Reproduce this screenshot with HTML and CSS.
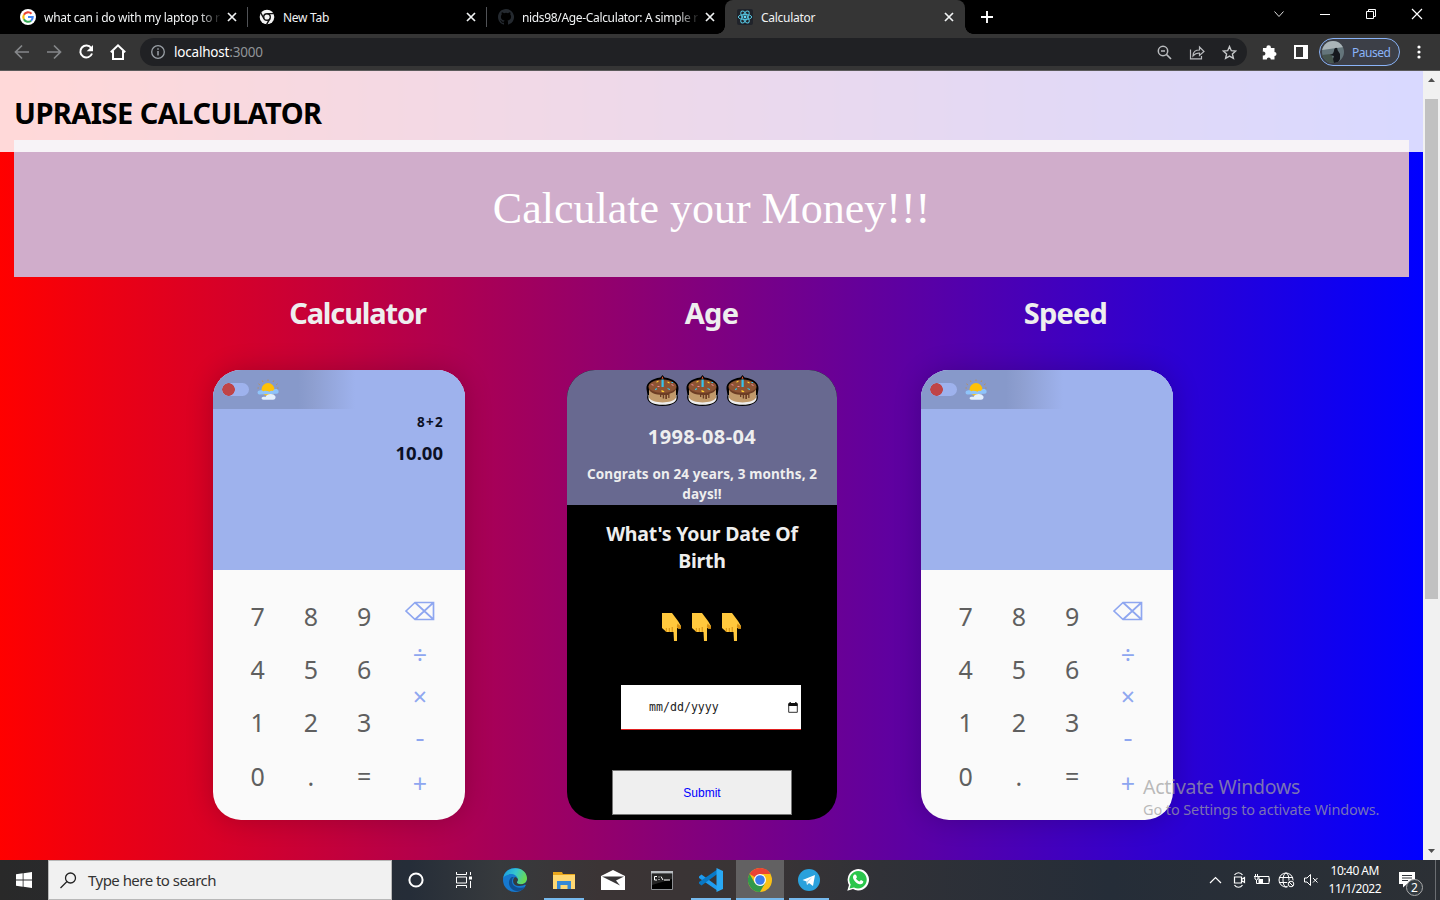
FILE: index.html
```html
<!DOCTYPE html>
<html lang="en">
<head>
<meta charset="utf-8">
<title>Calculator</title>
<link rel="stylesheet" href="styles.css">
</head>
<body>
<svg class="defs" width="0" height="0" aria-hidden="true">
  <symbol id="close" viewBox="0 0 10 10"><path d="M1 1l8 8M9 1L1 9" fill="none" stroke="#f1f3f4" stroke-width="1.7"/></symbol>
  <symbol id="sun" viewBox="0 0 22 22">
    <path d="M11 2V.5M6 3l-.7-1.500M16 3l.7-1.500M2.800 5.800L1.500 4.800M19.200 5.800l1.300-1M1.800 9H.5M20.200 9h1.300" stroke="#b98f5a" stroke-width="1"/>
    <circle cx="11" cy="10.500" r="6.500" fill="#ffc107"/>
    <path d="M2.500 15.500a2 2 0 010-4c2-.6 3 .2 4 .8 2-1 4-.2 6 .5 1-1.500 3-.8 3.500-.8 1-2.500 4.500-2.500 5.500-.3.500 2-.5 2.800-2 3z" fill="#8fc4fa"/>
    <path d="M6.500 20.800c-2.500 0-2.500-3 0-3 1-.1 1.500.3 2 .2 1-3.500 8-4.500 10-.5.4 2-.9 3.300-2.500 3.300z" fill="#e3effd"/>
  </symbol>
  <symbol id="cake" viewBox="0 0 34 34">
    <path d="M17 1l2 2.500C28 4.500 33.500 9 33 15l-1 6c2 6-4 11-15 11S0 27 2 21l-1-6C.5 9 6 4.500 15 3.500z" fill="#000"/>
    <path d="M3 21h28v3c0 4-5 6.800-14 6.800S3 28 3 24z" fill="#eee"/>
    <path d="M3.500 14h27v9.500c-3 6.500-24 6.500-27 0z" fill="#c19a6b"/>
    <path d="M3 13c0-10 28-10 28 0 0 3.500-3 5.800-7 6.800V24h-1.300v-3h-1.200v4h-1.700v-4h-1.200v3.500h-1.400V21h-1.400v2h-1.300v-2.200C7 20 3 17.500 3 13z" fill="#6d3d24"/>
    <ellipse cx="17" cy="12.500" rx="13.800" ry="6.500" fill="#8d5433"/>
    <path d="M16 5.500h2.200V13H16z" fill="#35c3ee"/><path d="M17 2.200l1 2.500h-2z" fill="#f45b36"/>
    <g fill="#ffcf33"><path d="M11 7.500l2-1v1.200l-2 1zM22 7.500l2 .8v1.200l-2-.8zM16 16l3 1.200-1 1-2-.5z"/></g>
    <g fill="#f28b9b"><path d="M6 10l2 .8v1l-2-.8zM26 10l2 1v1l-2-1zM12 12h2v1h-2z"/></g>
    <g fill="#35c3ee"><path d="M9.500 15l2-1v1.200l-2 1zM22 14l2.500 1v1.200L22 15zM26 8h1.500v1H26z"/></g>
  </symbol>
  <symbol id="point" viewBox="0 0 20 30">
    <path d="M0 1h10l6 8 3 5v2.500h-3l-1-1V29h-3l-.5-9H4.500L0 16z" fill="#ffc83d"/>
    <path d="M15.500 11.500l3.500 3v2.200h-2.700l-1.500-2.200z" fill="#d48d10"/>
    <path d="M4.300 16v4M7.300 16v4M10.200 15v5" stroke="#d48d10" fill="none"/>
  </symbol>
  <symbol id="back" viewBox="0 0 30 20"><path d="M1 10l9-8.500h18.500v17H10zM10 1.500l18.500 17M28.500 1.500L10 18.500" fill="none" stroke="#8ea6f0" stroke-width="1.700"/></symbol>
</svg>

<div class="tabs">
  <div class="tab">
    <svg class="fav" viewBox="0 0 16 16"><circle cx="8" cy="8" r="8" fill="#fff"/><g fill="none" stroke-width="2.100"><path d="M3.900 5.800A4.700 4.700 0 0111.500 4.800" stroke="#ea4335"/><path d="M3.900 5.800a4.700 4.700 0 000 4.400" stroke="#fbbc05"/><path d="M3.900 10.200a4.700 4.700 0 007.200 1.500" stroke="#34a853"/><path d="M8 8h4.700a4.700 4.700 0 01-1.600 3.700" stroke="#4285f4"/></g></svg>
    <span class="tab-title fade">what can i do with my laptop to r</span><svg class="x"><use href="#close"/></svg>
  </div>
  <div class="tab">
    <svg class="fav" viewBox="0 0 16 16"><circle cx="8" cy="8" r="7.300" fill="#f3f3f3"/><circle cx="8" cy="8" r="3.300" fill="none" stroke="#111" stroke-width="1.400"/><path d="M8 4.600h7M5 9.600L1.600 3.700M10.900 9.700L7.500 15.600" stroke="#111" stroke-width="1.400"/></svg>
    <span class="tab-title">New Tab</span><svg class="x"><use href="#close"/></svg>
  </div>
  <div class="tab nosep">
    <svg class="fav" viewBox="0 0 16 16"><path fill="#24292f" d="M8 0C3.580 0 0 3.580 0 8c0 3.540 2.290 6.530 5.470 7.590.4.070.55-.17.55-.38v-1.500c-2.230.48-2.700-.94-2.700-.94-.36-.92-.89-1.170-.89-1.170-.73-.5.050-.49.050-.49.800.060 1.230.83 1.230.83.720 1.230 1.880.87 2.340.67.070-.52.280-.87.500-1.070-1.780-.2-3.640-.89-3.640-3.950 0-.87.310-1.590.82-2.150-.08-.2-.36-1.020.080-2.120 0 0 .67-.21 2.200.82a7.600 7.600 0 014 0c1.530-1.040 2.200-.82 2.200-.82.440 1.100.160 1.920.080 2.120.510.560.820 1.270.820 2.150 0 3.070-1.870 3.750-3.650 3.950.290.250.540.730.540 1.480v2.200c0 .21.150.46.550.38A8 8 0 008 0z"/></svg>
    <span class="tab-title fade wide">nids98/Age-Calculator: A simple r</span><svg class="x"><use href="#close"/></svg>
  </div>
  <div class="tab active">
    <svg class="fav" viewBox="0 0 16 16"><rect width="16" height="16" rx="2" fill="#20232a"/><g fill="none" stroke="#55c4df" stroke-width="1"><ellipse cx="8" cy="8" rx="6.700" ry="2.600"/><ellipse cx="8" cy="8" rx="6.700" ry="2.600" transform="rotate(60 8 8)"/><ellipse cx="8" cy="8" rx="6.700" ry="2.600" transform="rotate(120 8 8)"/></g><circle cx="8" cy="8" r="1.400" fill="#61dafb"/></svg>
    <span class="tab-title">Calculator</span><svg class="x"><use href="#close"/></svg>
  </div>
  <svg class="plus" width="12" height="12" viewBox="0 0 12 12"><path d="M6 0v12M0 6h12" stroke="#fff" stroke-width="1.900"/></svg>
  <div class="controls">
    <svg width="46" height="28" viewBox="0 0 46 28"><path d="M18.500 11.500l4.500 5 4.500-5" fill="none" stroke="#ddd"/></svg>
    <svg width="46" height="28" viewBox="0 0 46 28"><path d="M18 14.500h10" stroke="#fff"/></svg>
    <svg width="46" height="28" viewBox="0 0 46 28"><path d="M18.500 11.500h7v7h-7zM20.500 11.500v-2h7v7h-2" fill="none" stroke="#fff"/></svg>
    <svg width="46" height="28" viewBox="0 0 46 28"><path d="M18 9l10 10M28 9L18 19" stroke="#fff" stroke-width="1.200"/></svg>
  </div>
</div>

<div class="toolbar">
  <div class="nav">
    <svg width="16" height="16" viewBox="0 0 16 16"><path d="M15 8H2M8 1.500L1.500 8 8 14.500" fill="none" stroke="#85878a" stroke-width="1.700"/></svg>
    <svg width="16" height="16" viewBox="0 0 16 16"><path d="M1 8h13M8 1.500L14.500 8 8 14.500" fill="none" stroke="#85878a" stroke-width="1.700"/></svg>
    <svg width="16" height="16" viewBox="0 0 16 16"><path d="M13.200 4A6 6 0 1014 9.500" fill="none" stroke="#fff" stroke-width="2"/><path d="M15 1v6.300H8.700z" fill="#fff"/></svg>
    <svg width="16" height="16" viewBox="0 0 16 16"><path d="M.8 8.300L8 1.400l7.200 6.900M3 7v8h10V7" fill="none" stroke="#fff" stroke-width="2"/></svg>
  </div>
  <div class="address">
    <svg width="14" height="14" viewBox="0 0 14 14"><circle cx="7" cy="7" r="6.300" fill="none" stroke="#9aa0a6" stroke-width="1.300"/><path d="M7 6v4.500M7 3.300v1.500" stroke="#9aa0a6" stroke-width="1.500"/></svg>
    <span class="url">localhost<i>:3000</i></span>
    <svg width="15" height="15" viewBox="0 0 15 15"><circle cx="6" cy="6" r="4.700" fill="none" stroke="#b9bbbe" stroke-width="1.500"/><path d="M4 6h4M9.500 9.500L14 14" stroke="#b9bbbe" stroke-width="1.700"/></svg>
    <svg width="16" height="15" viewBox="0 0 16 15"><path d="M1.500 4.500v9.300h11V11M4 11c0-4.500 3-6 6.500-6V2l4.500 4.500-4.500 4V8C7.500 8 5.500 9 4 11z" fill="none" stroke="#b9bbbe" stroke-width="1.200"/></svg>
    <svg width="15" height="15" viewBox="0 0 15 15"><path d="M7.500 1.500l1.800 4.200 4.500.3-3.400 3 1 4.400-3.900-2.300-3.900 2.300 1-4.400L1.200 6l4.500-.3z" fill="none" stroke="#c6c8ca" stroke-width="1.400"/></svg>
  </div>
  <svg class="puzzle" width="15" height="16" viewBox="0 0 15 16"><path d="M1 4h3.500a2.200 2.200 0 114.300 0h3.700v4a2 2 0 110 4v3.500H8.800a2 2 0 10-4 0H.8v-4a2 2 0 100-3.800z" fill="#fff"/></svg>
  <svg class="side" width="14" height="14" viewBox="0 0 14 14"><path d="M1 1h12v12H1z" fill="none" stroke="#fff" stroke-width="2"/><path d="M9 1h4v12H9z" fill="#fff"/></svg>
  <div class="profile">
    <svg width="22" height="22" viewBox="0 0 22 22"><defs><clipPath id="round"><circle cx="11" cy="11" r="11"/></clipPath></defs><g clip-path="url(#round)"><path d="M0 0h22v22H0z" fill="#64757b"/><path d="M0 0h22v6L0 9z" fill="#aab4b8"/><path d="M0 14l9-1 4 9H0z" fill="#46554e"/><path d="M12 10c0-4 4-4 3.500-1l2.500 4v5l-2 4h-4l-1-4 1-3-4-1 3-1.500z" fill="#15181e"/></g></svg>
    <span>Paused</span>
  </div>
  <svg class="dots" width="4" height="14" viewBox="0 0 4 14"><g fill="#fff"><circle cx="2" cy="2" r="1.600"/><circle cx="2" cy="7" r="1.600"/><circle cx="2" cy="12" r="1.600"/></g></svg>
</div>

<div class="window">
  <main class="page">
    <header class="site-header"><h1>UPRAISE CALCULATOR</h1></header>
    <div class="banner">Calculate your Money!!!</div>
    <div class="columns">
      <section class="column">
        <h2 class="long">Calculator</h2>
        <div class="card">
          <div class="display"><div class="mode"><span class="switch"></span><svg class="sun"><use href="#sun"/></svg></div>
            <div class="expr">8+2</div><div class="result">10.00</div></div>
          <div class="pad">
            <div class="digits"><b>7</b><b>8</b><b>9</b><b>4</b><b>5</b><b>6</b><b>1</b><b>2</b><b>3</b><b>0</b><b>.</b><b>=</b></div>
            <div class="ops"><svg><use href="#back"/></svg><b>÷</b><b>×</b><b class="minus">-</b><b class="add">+</b></div>
          </div>
        </div>
      </section>
      <section class="column">
        <h2>Age</h2>
        <div class="card age">
          <div class="answer">
            <div class="cakes"><svg><use href="#cake"/></svg><svg><use href="#cake"/></svg><svg><use href="#cake"/></svg></div>
            <div class="date">1998-08-04</div>
            <div class="congrats">Congrats on 24 years, 3 months, 2<br>days!!</div>
          </div>
          <div class="question">What's Your Date Of<br>Birth</div>
          <div class="points"><svg><use href="#point"/></svg><svg><use href="#point"/></svg><svg><use href="#point"/></svg></div>
          <div class="field"><span>mm/dd/yyyy</span><svg width="10" height="11" viewBox="0 0 10 11"><path d="M.7 2h8.600v8.300H.7z" fill="none" stroke="#333" stroke-width="1"/><path d="M.5 1h9v3h-9zM1.500 0h1.300v2H1.500zM7.200 0h1.300v2H7.200z" fill="#111"/></svg></div>
          <button class="submit">Submit</button>
        </div>
      </section>
      <section class="column">
        <h2>Speed</h2>
        <div class="card">
          <div class="display"><div class="mode"><span class="switch"></span><svg class="sun"><use href="#sun"/></svg></div></div>
          <div class="pad">
            <div class="digits"><b>7</b><b>8</b><b>9</b><b>4</b><b>5</b><b>6</b><b>1</b><b>2</b><b>3</b><b>0</b><b>.</b><b>=</b></div>
            <div class="ops"><svg><use href="#back"/></svg><b>÷</b><b>×</b><b class="minus">-</b><b class="add">+</b></div>
          </div>
        </div>
      </section>
    </div>
  </main>
  <div class="scrollbar">
    <svg width="17" height="17" viewBox="0 0 17 17"><path d="M5 11l3.500-4 3.500 4z" fill="#505050"/></svg>
    <div class="thumb"></div>
    <svg class="down" width="17" height="17" viewBox="0 0 17 17"><path d="M5 6l3.500 4L12 6z" fill="#505050"/></svg>
  </div>
</div>
<div class="watermark"><div class="wm-title">Activate Windows</div><div class="wm-sub">Go to Settings to activate Windows.</div></div>

<footer class="taskbar">
  <div class="start"><svg width="16" height="16" viewBox="0 0 16 16"><path d="M0 2.200l6.700-.9v6.300H0zM7.500 1.200L16 0v7.600H7.500zM0 8.400h6.700v6.300L0 13.800zM7.500 8.400H16V16l-8.500-1.200z" fill="#fff"/></svg></div>
  <div class="search"><svg width="17" height="17" viewBox="0 0 17 17"><circle cx="10.500" cy="6" r="5" fill="none" stroke="#222" stroke-width="1.300"/><path d="M7 9.500l-6.500 6.500" stroke="#222" stroke-width="1.300"/></svg><span>Type here to search</span></div>
  <div class="apps sys">
    <div><svg width="16" height="16" viewBox="0 0 16 16"><circle cx="8" cy="8" r="6.600" fill="none" stroke="#fff" stroke-width="2"/></svg></div>
    <div><svg width="16" height="16" viewBox="0 0 16 16"><path d="M.5 0v2.500h10V0M.5 16v-2.500h10V16M.5 5h10v6H.5zM14.500 0v3M14.500 9v7" fill="none" stroke="#fff"/><path d="M13 4.500h3v3h-3z" fill="#fff"/></svg></div>
  </div>
  <div class="apps">
    <div><svg width="24" height="24" viewBox="0 0 24 24"><defs><linearGradient id="eg" x1="0" y1=".2" x2="1" y2=".5"><stop offset="0" stop-color="#1b9de2"/><stop offset=".5" stop-color="#36c6cf"/><stop offset="1" stop-color="#6bdc4d"/></linearGradient></defs><circle cx="12" cy="12" r="12" fill="#1679d0"/><path d="M.2 10C2-3 23-3 24 10c0 5-4 7-8 6-3-.7-2-2-1-4C14 4 3 5 .2 10z" fill="url(#eg)"/><path d="M9 9c-5 3-4 12 4 14 4 .6 7-1 9.500-4-6 2-13 0-13.500-5-.2-2 .5-4 2-5z" fill="#104f91"/><path d="M12 9c-3 2-3 9 4 9 3 0 5-1 6-1.500L24 18V12c-1 4-5 5-8 4-3-.7-2-2-1-4 0-1-1-2.500-3-3z" fill="#353b3e"/></svg></div>
    <div class="run"><svg width="22" height="19" viewBox="0 0 22 19"><path d="M0 1h9l1 2h12v15H0z" fill="#e9a61c"/><path d="M0 4h22v14H0z" fill="#ffd872"/><path d="M4 18v-8h14v8h-3.500v-4h-7v4z" fill="#3689d6"/></svg></div>
    <div><svg width="24" height="20" viewBox="0 0 24 20"><path d="M0 6l12-6 12 6v14H0z" fill="#fff"/><path d="M1 6.500h22l-8 4 4 5L8 10z" fill="#373536"/></svg></div>
    <div><svg width="22" height="19" viewBox="0 0 22 19"><path d="M.5.5h21v18H.5z" fill="#000" stroke="#8c8f93"/><path d="M0 0h22v2.500H0z" fill="#b9bdc1"/><path d="M1 3h20v5L1 14z" fill="#252525"/><path d="M6 5.500H3.500V9H6M8 5.500v1M8 8v1M10 5.500l2 3.500M13 9h6" fill="none" stroke="#fff"/></svg></div>
    <div class="run"><svg width="24" height="24" viewBox="0 0 24 24"><path d="M0 8.500l2.500-2L19 18.500v4.500L0 10z" fill="#1f9cf0"/><path d="M0 15.500l2.500 2L19 5.500V1L0 14z" fill="#0878c6"/><path d="M17.500 0L24 3v18l-6.500 3z" fill="#29a8f4"/></svg></div>
    <div class="run current"><svg width="24" height="24" viewBox="0 0 24 24"><circle cx="12" cy="12" r="12" fill="#fbc116"/><path d="M12 12L1.600 6A12 12 0 0122.400 6H12z" fill="#ea4335"/><path d="M1.600 6A12 12 0 0012 24l5.200-9H6.800z" fill="#31994b"/><circle cx="12" cy="12" r="6" fill="#fff"/><circle cx="12" cy="12" r="4.800" fill="#3b7ded"/></svg></div>
    <div class="run"><svg width="22" height="22" viewBox="0 0 22 22"><circle cx="11" cy="11" r="11" fill="#2aa1dc"/><path d="M4.500 11L17 6l-2 11-4-3-2 2-.5-3.500z" fill="#fff"/><path d="M8.500 12.500l6-4.500-4.500 5-1 3z" fill="#b6d7e9"/></svg></div>
    <div><svg width="22" height="22" viewBox="0 0 22 22"><path d="M.3 21.700L2 16A10.700 10.700 0 116 20z" fill="#fff"/><path d="M2.500 19.500l1.200-4A8.700 8.700 0 117 18.500z" fill="#2bc64c"/><path d="M7.500 5.500l1.500.2 1 2.500-1 1.300c.8 1.500 2 2.400 3.500 3l1.400-1.400 2.400 1.200c.2 2-1.500 3.200-3.300 3C9.500 14.700 6.500 11.500 6 8.500c-.1-1.200.6-2.300 1.500-3z" fill="#fff"/></svg></div>
  </div>
  <div class="tray">
    <svg width="13" height="16" viewBox="0 0 13 16"><path d="M1 11l5.500-5.500L12 11" fill="none" stroke="#fff" stroke-width="1.200"/></svg>
    <svg width="13" height="16" viewBox="0 0 13 16"><path d="M1.500 5h7v6h-7zM8.500 7.500l3-2v5l-3-2M1.500 3c2-3 6-3 8 0M1.500 13c2 3 6 3 8 0" fill="none" stroke="#fff" stroke-width="1.200"/></svg>
    <svg width="17" height="16" viewBox="0 0 17 16"><path d="M5 4.500h10v7H5zM15.500 6.500v3M0 4.500h5M1.500 2v2.500M3.500 2v2.500M1 5v2l1.500 1L4 7V5M2.500 8v3.500H5" fill="none" stroke="#fff"/><path d="M5 7h4v4H5z" fill="#fff"/></svg>
    <svg width="17" height="16" viewBox="0 0 17 16"><g fill="none" stroke="#fff"><circle cx="8" cy="8" r="7"/><ellipse cx="8" cy="8" rx="3" ry="7"/><path d="M1 5.500h14M1 10.500h14"/></g><circle cx="13" cy="12" r="4" fill="#2b3036"/><circle cx="13" cy="12" r="2.800" fill="none" stroke="#fff"/><path d="M11 10l4 4" stroke="#fff"/></svg>
    <svg width="16" height="16" viewBox="0 0 16 16"><path d="M1.500 6H4l3.500-3.500v11L4 10H1.500zM10 6l4.500 4.500M14.500 6L10 10.500" fill="none" stroke="#fff"/></svg>
  </div>
  <div class="clock"><div>10:40 AM</div><div>11/1/2022</div></div>
  <div class="notice"><svg width="17" height="17" viewBox="0 0 17 17"><path d="M0 1h16v12H8l-4 3.500V13H0z" fill="#fff"/><path d="M3 4.500h10M3 7h10M3 9.500h6" stroke="#30353b"/></svg><span>2</span></div>
</footer>
</body>
</html>
```
FILE: styles.css
```css
* { box-sizing: border-box; }
body { margin: 0; width: 1440px; height: 900px; overflow: hidden; display: flex; flex-direction: column; background: #000; font-family: "Noto Sans", "Open Sans", sans-serif; }
svg { display: block; flex: none; }
h1, h2 { margin: 0; }
b, i { font-weight: 400; font-style: normal; }
.defs { position: absolute; }

.tabs { height: 34px; flex: none; display: flex; padding-left: 8px; background: #000; }
.tab { width: 239px; height: 34px; display: flex; align-items: center; padding: 0 10px 0 12px; position: relative; color: #f1f3f4; font-size: 12px; }
.tab::after { content: ""; position: absolute; right: -1px; top: 7px; width: 1px; height: 20px; background: #505256; }
.tab.nosep::after { display: none; }
.tab.active { width: 240px; background: #353535; border-radius: 8px 8px 0 0; }
.tab.active::after, .tab.active::before { content: ""; position: absolute; width: 8px; height: 8px; top: auto; bottom: 0; }
.tab.active::before { left: -8px; background: radial-gradient(circle at 0 0, #000 7.5px, #353535 8px); }
.tab.active::after { right: -8px; background: radial-gradient(circle at 100% 0, #000 7.5px, #353535 8px); }
.fav { width: 16px; height: 16px; }
.tab-title { flex: none; width: 181px; margin-left: 8px; white-space: nowrap; letter-spacing: -0.28px; }
.tab-title.wide { letter-spacing: -0.34px; }
.fade { -webkit-mask-image: linear-gradient(90deg, #000 155px, transparent 178px); mask-image: linear-gradient(90deg, #000 155px, transparent 178px); }
.x { width: 10px; height: 10px; margin-left: 2px; }
.plus { margin: 11px 0 0 16px; }
.controls { display: flex; margin-left: auto; }

.toolbar { height: 37px; flex: none; display: flex; align-items: center; background: #353535; border-bottom: 1px solid #5b5b5b; }
.nav { display: flex; gap: 16px; padding-left: 14px; }
.address { width: 1107px; height: 28px; margin-left: 14px; padding: 0 10.500px 0 11px; border-radius: 14px; background: #202124; display: flex; align-items: center; }
.url { margin-left: 9px; margin-right: auto; font-size: 13.5px; color: #fff; letter-spacing: -0.2px; }
.url i { color: #909498; }
.address svg + svg { margin-left: 17px; }
.puzzle { margin-left: 15px; }
.side { margin-left: 17px; }
.profile { width: 81px; height: 28px; margin-left: 11px; padding-left: 2px; border: 1px solid #8ab4f8; border-radius: 14px; background: #3c3f47; display: flex; align-items: center; gap: 8px; color: #8ab4f8; font-size: 12px; letter-spacing: -0.5px; }
.dots { margin-left: 16.500px; }

.window { height: 789px; flex: none; display: flex; }
.page { width: 1423px; background: linear-gradient(90deg, #f00, #00f); display: flex; flex-direction: column; }
.site-header { height: 81px; flex: none; padding: 22px 14px 0; background: rgba(255, 255, 255, 0.85); }
h1 { font-size: 29px; line-height: 40px; color: #000; letter-spacing: -0.54px; white-space: nowrap; }
.banner { height: 137px; flex: none; margin: -12px 14px 0; background: linear-gradient(#f7f3f7 12px, #d0adcb 12px); display: flex; align-items: center; justify-content: center; font: 44px/50px "Liberation Serif", "Times New Roman", serif; color: #fff; }
.columns { display: grid; grid-template-columns: repeat(3, 354px); justify-content: center; }
.column { padding-top: 13px; }
h2 { height: 80px; line-height: 45px; font-size: 29px; text-align: center; color: #eee; letter-spacing: -0.8px; }
h2.long { letter-spacing: -1.15px; }
.card { width: 252px; height: 450px; margin-left: 32.500px; border-radius: 28px; overflow: hidden; background: #fafafa; box-shadow: 0 0 28px rgba(0, 0, 0, 0.2); }
.display { height: 200px; background: #9eb2ed; color: #0b1024; text-align: right; font-weight: 700; }
.mode { height: 39px; padding-left: 9px; display: flex; align-items: center; background: linear-gradient(90deg, #8799ca 85px, #8e9fd0 100px, #9eb2ed 142px); }
.switch { width: 27px; height: 13px; border-radius: 7px; background: radial-gradient(circle at 6.5px 6.5px, #c04446 6px, #9eb2ed 6.6px); }
.sun { width: 22px; height: 22px; margin: 1px 0 0 8px; }
.expr { padding: 3px 21px 0; font-size: 13.5px; line-height: 20px; letter-spacing: 1.3px; }
.result { padding: 7px 22px 0; font-size: 18.500px; line-height: 28px; letter-spacing: 0; }
.pad { height: 250px; padding: 19.500px 20px 17px 18px; display: flex; }
.digits { width: 160px; display: grid; grid-template-columns: repeat(3, 53.3px); grid-template-rows: repeat(4, 53.4px); text-align: center; font-size: 25px; line-height: 52px; color: #5f5f5f; }
.ops { flex: none; width: 52px; margin-left: 3px; display: flex; flex-direction: column; align-items: center; color: #8ea6f0; font-size: 25px; }
.ops svg { width: 30px; height: 20px; margin: 11.500px 0 13px; }
.ops b { height: 42px; line-height: 41px; }
.ops .minus { line-height: 39px; transform: scaleX(1.15); }
.ops .add { line-height: 47px; }

.age { width: 270px; background: #000; color: #eee; box-shadow: none; font-weight: 700; text-align: center; display: flex; flex-direction: column; align-items: center; }
.answer { width: 100%; height: 135px; flex: none; background: #686990; }
.cakes { display: flex; justify-content: center; gap: 5px; padding-top: 4px; }
.cakes svg { width: 35px; height: 34px; }
.date { margin-top: 14px; font-size: 20px; line-height: 30px; letter-spacing: 0.4px; }
.congrats { margin-top: 12px; font-size: 13.5px; line-height: 20px; letter-spacing: 0.12px; white-space: nowrap; }
.question { margin-top: 15px; font-size: 19.5px; line-height: 27px; letter-spacing: -0.2px; white-space: nowrap; }
.points { display: flex; gap: 10px; margin-top: 38px; }
.points svg { width: 20px; height: 30px; }
.field { width: 180px; height: 45px; flex: none; margin: 43px 0 0 18px; padding: 0 3px 0 28px; display: flex; align-items: center; justify-content: space-between; background: #fff; border-bottom: 1px solid #e02020; color: #222; font: 11.6px "DejaVu Sans Mono", monospace; }
.submit { width: 180px; height: 45px; flex: none; margin-top: 40px; background: #efefef; border: 1px solid #767676; color: #00f; font: 12px "Liberation Sans", Arial, sans-serif; }

.scrollbar { width: 17px; background: #f1f1f1; display: flex; flex-direction: column; align-items: center; }
.thumb { width: 13px; height: 500px; margin-top: 11px; background: #c1c1c1; }
.down { margin-top: auto; }
.watermark { position: absolute; left: 1143px; top: 774px; color: rgba(160, 160, 160, 0.72); white-space: nowrap; }
.wm-title { font-size: 19.5px; line-height: 26px; letter-spacing: -0.25px; }
.wm-sub { font-size: 14.5px; line-height: 19px; letter-spacing: -0.11px; }

.taskbar { height: 40px; flex: none; display: flex; background: linear-gradient(90deg, #292929, #252d38 410px, #373a3d 500px, #3b3435 600px, #393435 760px, #303137 880px, #252d38 1110px, #2c3035 1440px); }
.start { width: 48px; display: flex; align-items: center; justify-content: center; }
.search { width: 344px; border: 1px solid #b8b8b8; background: #f1f1f1; display: flex; align-items: center; padding-left: 11px; gap: 11px; color: #333; font-size: 15px; letter-spacing: -0.53px; }
.apps { display: flex; gap: 1px; margin-left: 3px; }
.apps.sys { gap: 0; margin-left: 0; }
.apps > div { width: 48px; height: 40px; display: flex; align-items: center; justify-content: center; }
.run { background: linear-gradient(#76b9ed, #76b9ed) center bottom / 40px 2px no-repeat; }
.current { background: linear-gradient(#76b9ed, #76b9ed) center bottom / 48px 2px no-repeat #626162; }
.tray { display: flex; align-items: center; gap: 7.500px; margin-left: auto; }
.tray svg:nth-child(2) { margin-left: 4px; }
.clock { margin-left: 10px; color: #fff; font-size: 12px; line-height: 18px; letter-spacing: -0.5px; text-align: center; padding-top: 2px; white-space: nowrap; }
.notice { width: 41px; margin-left: 18px; padding-top: 11px; position: relative; }
.notice::after { content: ""; position: absolute; right: 4px; top: 0; width: 1px; height: 40px; background: #6b6e72; }
.notice span { position: absolute; left: 7px; top: 19px; width: 17px; height: 17px; border: 1px solid #aaa; border-radius: 50%; background: #333a40; color: #fff; font-size: 12px; line-height: 15px; text-align: center; }
```
